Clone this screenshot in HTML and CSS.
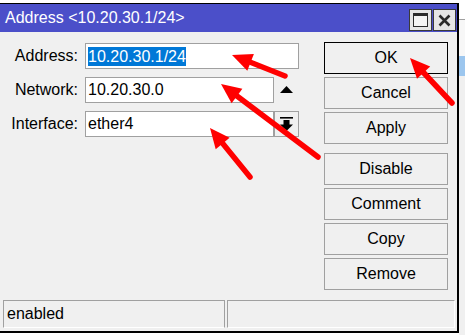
FILE: index.html
```html
<!DOCTYPE html>
<html lang="en">
	<head>
		<meta charset="utf-8"/>
		<link rel="stylesheet" href="styles.css">
		<title>Address &lt;10.20.30.1/24&gt;</title>
	</head>
	<body>
		<div class="desk">
			<div class="window">
				<div class="titlebar">
					<span class="title">Address &lt;10.20.30.1/24&gt;</span>
					<div class="title-btns">
						<button type="button" class="tbtn">
							<svg width="15" height="14" viewBox="0 0 15 14"><rect x="0.5" y="0.5" width="14" height="13" fill="#f4f4f4" stroke="#2b2b2b"/><rect x="0" y="0" width="15" height="3" fill="#2b2b2b"/></svg>
						</button>
						<button type="button" class="tbtn">
							<svg width="13" height="13" viewBox="0 0 13 13"><path d="M1.5 1.5 L11.5 11.5 M11.5 1.5 L1.5 11.5" stroke="#2b2b2b" stroke-width="2.6"/></svg>
						</button>
					</div>
				</div>
				<div class="content">
					<div class="main">
						<div class="fields">
							<label>Address:</label>
							<div class="input wide"><span class="sel">10.20.30.1/24</span></div>
							<label>Network:</label>
							<div class="input">10.20.30.0</div>
							<span class="tri"><svg width="13" height="7" viewBox="0 0 13 7"><path d="M6.5 0 L13 7 L0 7 z" fill="#000"/></svg></span>
							<label>Interface:</label>
							<div class="input">ether4</div>
							<span class="drop"><svg width="13" height="14" viewBox="0 0 13 14"><rect x="0" y="0" width="13" height="1.6" fill="#000"/><rect x="3.5" y="3" width="6" height="5" fill="#000"/><path d="M0 7.5 L13 7.5 L6.5 14 z" fill="#000"/></svg></span>
						</div>
						<div class="actions">
							<button type="button" class="btn default">OK</button>
							<button type="button" class="btn">Cancel</button>
							<button type="button" class="btn">Apply</button>
							<button type="button" class="btn spaced">Disable</button>
							<button type="button" class="btn">Comment</button>
							<button type="button" class="btn">Copy</button>
							<button type="button" class="btn">Remove</button>
						</div>
					</div>
					<div class="statusbar">
						<div class="pane first">enabled</div>
						<div class="pane"></div>
					</div>
				</div>
			</div>
			<div class="side">
				<div class="side-top"></div>
				<div class="side-mid"></div>
				<div class="side-blue"></div>
				<div class="side-low"></div>
			</div>
			<!-- annotation arrows drawn over the dialog -->
			<svg class="arrows" width="465" height="335" viewBox="0 0 465 335">
				<g stroke="#ff0000" stroke-width="5.5" stroke-linecap="round" fill="none">
					<line x1="246" y1="60.5" x2="285" y2="76"/>
					<line x1="233" y1="93" x2="318" y2="157"/>
					<line x1="219.5" y1="139.6" x2="250" y2="177"/>
					<line x1="420.2" y1="69" x2="452" y2="103"/>
				</g>
				<g fill="#ff0000">
					<polygon points="232,55 247.3,70.8 253.9,54"/>
					<polygon points="221,84 231.6,103.2 242.4,88.8"/>
					<polygon points="210,128 215.7,149.2 229.6,137.8"/>
					<polygon points="410,58 417,78.7 430.2,66.5"/>
				</g>
			</svg>
		</div>
	</body>
</html>
```

FILE: styles.css
```css
* {
	margin: 0;
	padding: 0;
	box-sizing: border-box;
}
body {
	background-color: #ffffff;
	font-family: "Liberation Sans", Arial, sans-serif;
	font-size: 16px;
	color: #000000;
}
.desk {
	position: relative;
	display: flex;
	width: 465px;
	height: 335px;
	overflow: hidden;
}
.window {
	display: flex;
	flex-direction: column;
	width: 459px;
	height: 330px;
	margin-top: 3px;
	background-color: #f0f0f0;
	border-top: 1px solid #000000;
	border-right: 2px solid #000000;
	border-bottom: 2px solid #000000;
}
.titlebar {
	display: flex;
	justify-content: space-between;
	height: 28px;
	padding: 0 1px 0 5px;
	background-color: #4b4fc9;
	color: #ffffff;
}
.title {
	line-height: 28px;
}
.title-btns {
	display: flex;
	gap: 1px;
	padding-top: 5px;
}
.tbtn {
	display: flex;
	align-items: center;
	justify-content: center;
	width: 23px;
	height: 22px;
	background-color: #e6e6e6;
	border: 1px solid #3a3a3a;
}
.content {
	display: flex;
	flex-direction: column;
	flex: 1;
}
.main {
	display: flex;
	padding-top: 10px;
}
.fields {
	display: grid;
	grid-template-columns: 85px 189px 25px;
	grid-auto-rows: 26px;
	row-gap: 8px;
	margin-top: 1px;
	align-content: start;
}
.fields label {
	text-align: right;
	padding-right: 7px;
	line-height: 26px;
}
.input {
	display: flex;
	align-items: center;
	padding-left: 2px;
	background-color: #ffffff;
	border: 1px solid #a0a0a0;
	white-space: nowrap;
}
.input.wide {
	grid-column: 2 / 4;
}
.sel {
	display: inline-block;
	line-height: 19px;
	background-color: #0078d7;
	color: #ffffff;
}
.tri {
	display: flex;
	align-items: center;
	justify-content: center;
	padding-bottom: 2px;
}
.drop {
	display: flex;
	align-items: center;
	justify-content: center;
	background-color: #f0f0f0;
	border: 1px solid #a0a0a0;
}
.actions {
	display: flex;
	flex-direction: column;
	gap: 3px;
	width: 124px;
	margin-left: 25px;
}
.btn {
	height: 32px;
	font-family: inherit;
	font-size: 16px;
	color: #000000;
	background-color: #f0f0f0;
	border: 1px solid #a0a0a0;
}
.btn.default {
	border-color: #000000;
}
.btn.spaced {
	margin-top: 6px;
}
.statusbar {
	display: flex;
	gap: 2px;
	margin-top: auto;
	padding: 0 2px 3px 3px;
}
.pane {
	flex: 1;
	height: 28px;
	padding-left: 3px;
	line-height: 26px;
	border: 1px solid #a0a0a0;
	border-bottom-color: #ffffff;
	border-right-color: #ffffff;
}
.pane.first {
	flex: 0 0 222px;
	border-right-color: #a0a0a0;
}
.side {
	display: flex;
	flex-direction: column;
	flex: 1;
}
.side-top {
	height: 20px;
	background-color: #ffffff;
	border-bottom: 1px solid #a0a0a0;
}
.side-mid {
	height: 36px;
	background-color: #f7f7f7;
}
.side-blue {
	height: 20px;
	background-color: #9cc6ee;
}
.side-low {
	flex: 1;
	background-color: #f0f0f0;
}
.arrows {
	position: absolute;
	left: 0;
	top: 0;
	pointer-events: none;
}
```
